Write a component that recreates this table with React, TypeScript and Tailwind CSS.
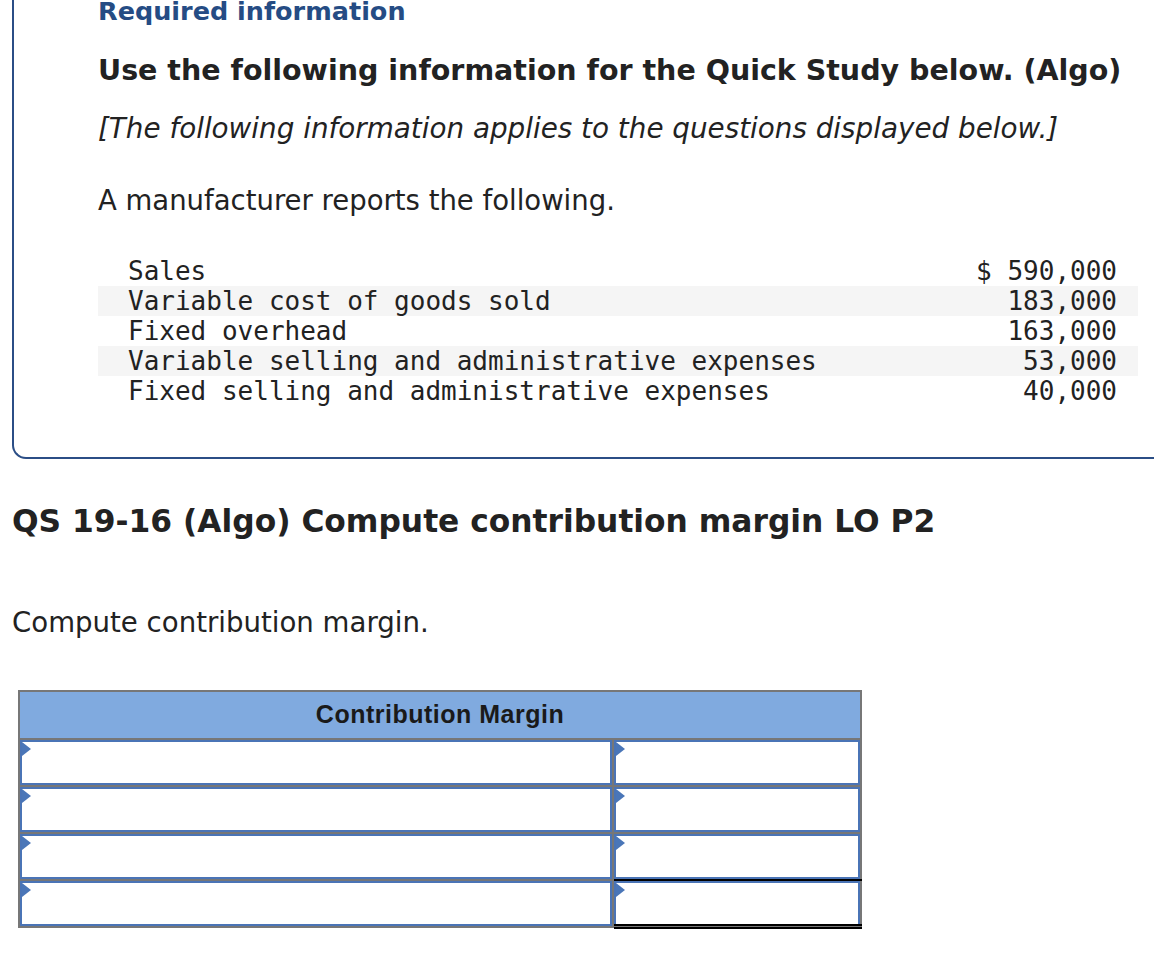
import React from "react";

const rows: [string, string][] = [
  ["Sales", "$ 590,000"],
  ["Variable cost of goods sold", "183,000"],
  ["Fixed overhead", "163,000"],
  ["Variable selling and administrative expenses", "53,000"],
  ["Fixed selling and administrative expenses", "40,000"],
];

function Tri() {
  return (
    <svg className="absolute left-0 top-0" width="9" height="14" viewBox="0 0 9 14">
      <polygon points="0,0 9,7 0,14" fill="#4a76b8" />
    </svg>
  );
}

function Cell({ under }: { under?: 0 | 1 | 2 }) {
  return (
    <div className="relative h-full border-2 border-[#4a74b6] bg-white">
      <Tri />
      {under === 1 && <div className="absolute -left-[2px] -right-[4px] -bottom-[4px] h-[2px] bg-black" />}
      {under === 2 && (
        <>
          <div className="absolute -left-[2px] -right-[4px] -bottom-[2px] h-[2px] bg-black" />
          <div className="absolute -left-[2px] -right-[4px] -bottom-[5px] h-[2px] bg-black" />
        </>
      )}
    </div>
  );
}

export default function App() {
  return (
    <div className="w-[1154px] h-[964px] overflow-hidden bg-white text-[#222] font-['DejaVu_Sans',sans-serif]">
      <div className="ml-[12px] flex w-[1250px] h-[459px] flex-col border-l-2 border-b-2 border-[#2b4e86] rounded-bl-[14px] pl-[84px]">
        <div className="-mt-[4px] text-[25.5px] font-bold leading-[30px] text-[#254c84] whitespace-nowrap">
          Required information
        </div>
        <div className="mt-[27px] text-[28.5px] font-bold leading-[36px] whitespace-nowrap">
          Use the following information for the Quick Study below. (Algo)
        </div>
        <div className="mt-[22px] text-[27.8px] italic leading-[36px] whitespace-nowrap">
          [The following information applies to the questions displayed below.]
        </div>
        <div className="mt-[35px] text-[27.5px] leading-[36px] whitespace-nowrap">
          A manufacturer reports the following.
        </div>
        <div className="mt-[38px] w-[1040px] text-[26px] font-['DejaVu_Sans_Mono',monospace]">
          {rows.map(([l, v], i) => (
            <div
              key={l}
              className={
                i % 2 === 1
                  ? "flex h-[30px] items-center justify-between bg-[#f5f5f5] pl-[30px] pr-[21px] leading-[30px]"
                  : "flex h-[30px] items-center justify-between pl-[30px] pr-[21px] leading-[30px]"
              }
            >
              <span className="whitespace-pre">{l}</span>
              <span className="whitespace-pre">{v}</span>
            </div>
          ))}
        </div>
      </div>

      <div className="pl-[12px]">
        <div className="mt-[42px] text-[31.3px] font-bold leading-[40px] whitespace-nowrap">
          QS 19-16 (Algo) Compute contribution margin LO P2
        </div>
        <div className="mt-[64px] text-[27.6px] leading-[36px] whitespace-nowrap">Compute contribution margin.</div>
      </div>

      <div className="ml-[18px] mt-[49px] w-[844px] border-2 border-[#777]">
        <div className="flex h-[46px] items-center justify-center bg-[#80aadf] font-['Liberation_Sans',Arial,sans-serif] text-[25px] font-bold tracking-[0.5px] text-[#1a1a1a]">
          Contribution Margin
        </div>
        {[0, 1, 2, 3].map((r) => (
          <div key={r} className="grid h-[47px] grid-cols-[592px_1fr] border-t-2 border-[#777]">
            <div className="h-[45px]">
              <Cell />
            </div>
            <div className="h-[45px] border-l-2 border-[#777]">
              <Cell under={r === 2 ? 1 : r === 3 ? 2 : 0} />
            </div>
          </div>
        ))}
      </div>
    </div>
  );
}
